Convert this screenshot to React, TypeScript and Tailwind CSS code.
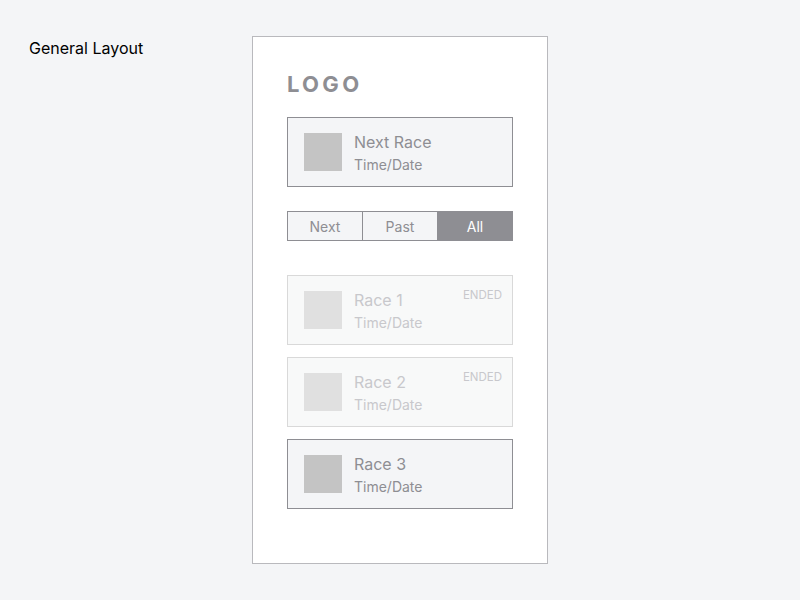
const races = [
  { name: 'Race 1', ended: true },
  { name: 'Race 2', ended: true },
  { name: 'Race 3', ended: false },
];

const tabs = ['Next', 'Past', 'All'];

const RaceCard = ({ title, ended }: { title: string; ended?: boolean }) => (
  <div
    className={`relative h-[70px] flex items-center pl-[16px] border ${
      ended ? 'border-[#d9d9d9] bg-[#f8f9f9]' : 'border-[#8e8e93] bg-[#f4f5f7]'
    }`}
  >
    <div className={`w-[38px] h-[38px] ${ended ? 'bg-[#e0e0e0]' : 'bg-[#c4c4c4]'}`} />
    <div className={`ml-3 pt-[2px] flex flex-col ${ended ? 'text-[#c8c8cc]' : 'text-[#8e8e93]'}`}>
      <span className="text-[16px] leading-[22px]">{title}</span>
      <span className="text-[14px] leading-[20px] mt-[2px]">Time/Date</span>
    </div>
    {ended && (
      <span className="absolute top-[12px] right-[10px] text-[11.5px] leading-[14px] text-[#c8c8cc]">
        ENDED
      </span>
    )}
  </div>
);

const App = () => {
  return (
    <div className="min-h-screen bg-[#f4f5f7] font-['Inter',sans-serif] flex items-start pt-[36px] pl-[29px]">
      <div className="w-[223px] text-[16px] leading-6 text-black">General Layout</div>

      <div className="w-[296px] h-[528px] border border-[#b9b9bd] bg-white px-[34px] flex flex-col">
        <h1 className="mt-[33px] text-[22px] leading-[28px] font-bold tracking-[0.15em] text-[#8e8e93]">
          LOGO
        </h1>

        <div className="mt-[19px]">
          <RaceCard title="Next Race" />
        </div>

        <div className="mt-[24px] flex h-[30px] border border-[#8e8e93]">
          {tabs.map((tab, i) => (
            <div
              key={tab}
              className={`flex-1 flex items-center justify-center text-[14px] pt-px ${
                i > 0 ? 'border-l border-[#8e8e93]' : ''
              } ${tab === 'All' ? 'bg-[#8e8e93] text-white' : 'bg-[#f4f5f7] text-[#8e8e93]'}`}
            >
              {tab}
            </div>
          ))}
        </div>

        <div className="mt-[34px] flex flex-col gap-[12px]">
          {races.map((race) => (
            <RaceCard key={race.name} title={race.name} ended={race.ended} />
          ))}
        </div>
      </div>
    </div>
  );
};

export default App;
